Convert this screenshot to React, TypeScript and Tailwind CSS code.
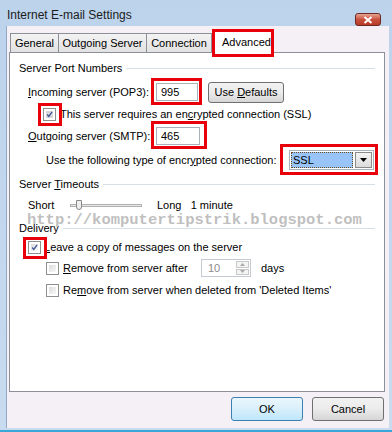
import React from 'react'

const FONT = { fontFamily: '"Liberation Sans", Arial, sans-serif' }

function RedBox({ className }: { className: string }) {
  return <div className={`pointer-events-none absolute border-[3px] border-[#e8000b] ${className}`} />
}

function Check({ checked = false, muted = false }: { checked?: boolean; muted?: boolean }) {
  return (
    <div className="w-[13px] h-[13px] border border-[#8f8f8f] bg-white p-[2px] shrink-0">
      <div className={`w-full h-full relative ${muted ? 'bg-[#d8d8d8]' : 'bg-gradient-to-br from-[#dcdcdc] to-[#f8f8f8]'}`}>
        {checked && (
          <svg viewBox="0 0 9 9" className="absolute inset-0 w-full h-full">
            <path d="M1.5 4.5 L3.6 7 L7.8 1.2" fill="none" stroke="#42579a" strokeWidth="1.7" />
          </svg>
        )}
      </div>
    </div>
  )
}

function Group({ label, u, rest, before = '' }: { label?: string; u?: string; rest?: string; before?: string }) {
  return (
    <div className="flex items-center h-[16px] pl-[9px] pr-[9px]">
      <span className="whitespace-nowrap">
        {before}{u && <span className="underline">{u}</span>}{rest}{label}
      </span>
      <div className="flex-1 ml-[4px] h-px bg-[#d5dfe5]" />
    </div>
  )
}

export default function App() {
  return (
    <div style={FONT} className="w-[392px] h-[432px] bg-gradient-to-b from-[#bcd3ec] to-[#c8dbef] flex flex-col text-[11px] text-black overflow-hidden">
      {/* title bar */}
      <div className="h-[26px] flex items-start shrink-0">
        <div className="pl-[7px] pt-[6px] text-[12px] text-[#1b1b1b]">Internet E-mail Settings</div>
        <div className="ml-auto mr-[11px] mt-[13px] w-[26px] h-[13px] rounded-[3px] border border-[#6d2a23] bg-gradient-to-b from-[#e8a393] via-[#c8513e] to-[#b93a26] flex items-center justify-center">
          <svg viewBox="0 0 10 8" className="w-[10px] h-[8px]">
            <path d="M1.5 1 L8.5 7 M8.5 1 L1.5 7" stroke="white" strokeWidth="2" />
          </svg>
        </div>
      </div>

      {/* client */}
      <div className="flex-1 ml-[6px] mr-[3px] mb-[2px] bg-[#f5eff6] border-l border-[#8fa9c6] flex flex-col pl-[2px] pr-[4px]">
        {/* tabs */}
        <div className="flex items-end h-[26px] pl-[1px] relative z-10">
          {[
            ['General', 'w-[49px]'],
            ['Outgoing Server', 'w-[89px]'],
            ['Connection', 'w-[66px]'],
          ].map(([t, w]) => (
            <div key={t} className={`${w} h-[19px] -mr-px border border-b-0 border-[#8e9099] bg-gradient-to-b from-[#f3f3f3] to-[#e2e2e2] flex items-center justify-center mb-0`}>
              {t}
            </div>
          ))}
          <div className="relative w-[62px] h-[23px] ml-[1px] -mb-px border border-b-0 border-[#8e9099] bg-white flex items-start pt-[3px] pl-[9px]">
            Advanced
            <RedBox className="-left-[1px] -top-[2px] w-[62px] h-[28px]" />
          </div>
        </div>

        {/* panel */}
        <div className="relative h-[340px] bg-white border border-[#8e9099] flex flex-col">
          <div className="mt-[7px]">
            <Group label="Server Port Numbers" />
          </div>

          <div className="mt-[5px] h-[22px] flex items-center pl-[18px]">
            <span className="w-[128px]"><span className="underline">I</span>ncoming server (POP3):</span>
            <div className="relative">
              <div className="w-[42px] h-[18px] border border-[#a9b1b9] pl-[4px] flex items-center">995</div>
              <RedBox className="-left-[5px] -top-[5px] w-[51px] h-[27px]" />
            </div>
            <div className="ml-[10px] w-[76px] h-[21px] rounded-[3px] border border-[#707070] bg-gradient-to-b from-[#f2f2f2] via-[#ebebeb] to-[#d6d6d6] flex items-center justify-center">
              Use&nbsp;<span className="underline">D</span>efaults
            </div>
          </div>

          <div className="mt-[3px] h-[16px] flex items-center pl-[33px]">
            <div className="relative">
              <Check checked muted />
              <RedBox className="-left-[5px] -top-[5px] w-[24px] h-[23px]" />
            </div>
            <span className="ml-[4px]">This server requires an en<span className="underline">c</span>rypted connection (SSL)</span>
          </div>

          <div className="mt-[3px] h-[22px] flex items-center pl-[18px]">
            <span className="w-[128px]"><span className="underline">O</span>utgoing server (SMTP):</span>
            <div className="relative">
              <div className="w-[44px] h-[18px] border border-[#a9b1b9] pl-[4px] flex items-center">465</div>
              <RedBox className="-left-[5px] -top-[6px] w-[56px] h-[28px]" />
            </div>
          </div>

          <div className="mt-[3px] h-[20px] flex items-center pl-[36px]">
            <span className="w-[243px]">Use the following type of encr<span className="underline">y</span>pted connection:</span>
            <div className="relative">
              <div className="w-[85px] h-[20px] border border-[#a9b1b9] flex p-[1px]">
                <div className="flex-1 bg-[#99c4f8] border border-dotted border-[#6b4a28] flex items-center pl-[1px]">SSL</div>
                <div className="w-[17px] ml-[2px] border border-[#8b8b8b] bg-gradient-to-b from-[#f4f4f4] to-[#dcdcdc] flex items-center justify-center">
                  <svg viewBox="0 0 7 4" className="w-[7px] h-[4px]"><path d="M0 0 H7 L3.5 4 Z" fill="#000" /></svg>
                </div>
              </div>
              <RedBox className="-left-[9px] -top-[6px] w-[98px] h-[31px]" />
            </div>
          </div>

          <div className="mt-[6px]">
            <Group before="Server " u="T" rest="imeouts" />
          </div>

          <div className="mt-[5px] h-[16px] flex items-center pl-[18px]">
            <span className="w-[42px]">Short</span>
            <div className="relative w-[72px] h-[10px] flex items-center">
              <div className="w-full h-[3px] border border-[#b0b0b0] bg-[#e7e7e7]" />
              <div className="absolute left-[6px] top-0 w-[6px] h-[10px] border border-[#8a8a8a] bg-[#eeeeee] rounded-b-[3px]" />
            </div>
            <span className="ml-[15px]">Long&nbsp;&nbsp;&nbsp;1 minute</span>
          </div>

          <div className="mt-[7px]">
            <Group label="Delivery" />
          </div>

          <div className="mt-[3px] h-[16px] flex items-center pl-[18px]">
            <div className="relative">
              <Check checked />
              <RedBox className="-left-[5px] -top-[4px] w-[24px] h-[22px]" />
            </div>
            <span className="ml-[3px]"><span className="underline">L</span>eave a copy of messages on the server</span>
          </div>

          <div className="mt-[4px] h-[18px] flex items-center pl-[36px]">
            <Check />
            <span className="ml-[4px] w-[138px]"><span className="underline">R</span>emove from server after</span>
            <div className="w-[50px] h-[18px] border border-[#c5cbd0] flex p-[1px]">
              <div className="flex-1 pl-[5px] flex items-center text-[#8a8a8a]">10</div>
              <div className="w-[13px] flex flex-col gap-[1px]">
                <div className="flex-1 border border-[#c8c8c8] bg-[#f4f4f4] flex items-center justify-center">
                  <svg viewBox="0 0 5 3" className="w-[5px] h-[3px]"><path d="M0 3 H5 L2.5 0 Z" fill="#a8a8a8" /></svg>
                </div>
                <div className="flex-1 border border-[#c8c8c8] bg-[#f4f4f4] flex items-center justify-center">
                  <svg viewBox="0 0 5 3" className="w-[5px] h-[3px]"><path d="M0 0 H5 L2.5 3 Z" fill="#a8a8a8" /></svg>
                </div>
              </div>
            </div>
            <span className="ml-[10px]">days</span>
          </div>

          <div className="mt-[5px] h-[16px] flex items-center pl-[36px]">
            <Check />
            <span className="ml-[4px]">Re<span className="underline">m</span>ove from server when deleted from 'Deleted Items'</span>
          </div>

          {/* watermark */}
          <div
            style={{ fontFamily: '"Liberation Mono", "Courier New", monospace' }}
            className="absolute left-[17px] top-[156px] text-[15.5px] font-bold text-[#b4b4b4]/85 whitespace-nowrap pointer-events-none"
          >
            http://komputertipstrik.blogspot.com
          </div>
        </div>

        {/* buttons */}
        <div className="flex justify-end gap-[9px] pt-[5px] pr-[1px]">
          <div className="w-[72px] h-[24px] rounded-[3px] border border-[#3c7fb1] bg-gradient-to-b from-[#eaf6fd] via-[#d9effb] to-[#bee6fd] flex items-center justify-center">OK</div>
          <div className="w-[72px] h-[24px] rounded-[3px] border border-[#707070] bg-gradient-to-b from-[#f2f2f2] via-[#ebebeb] to-[#d6d6d6] flex items-center justify-center">Cancel</div>
        </div>
        <div className="flex-1" />
      </div>
      <div className="h-[2px] bg-[#3aa7d8] shrink-0" />
    </div>
  )
}
